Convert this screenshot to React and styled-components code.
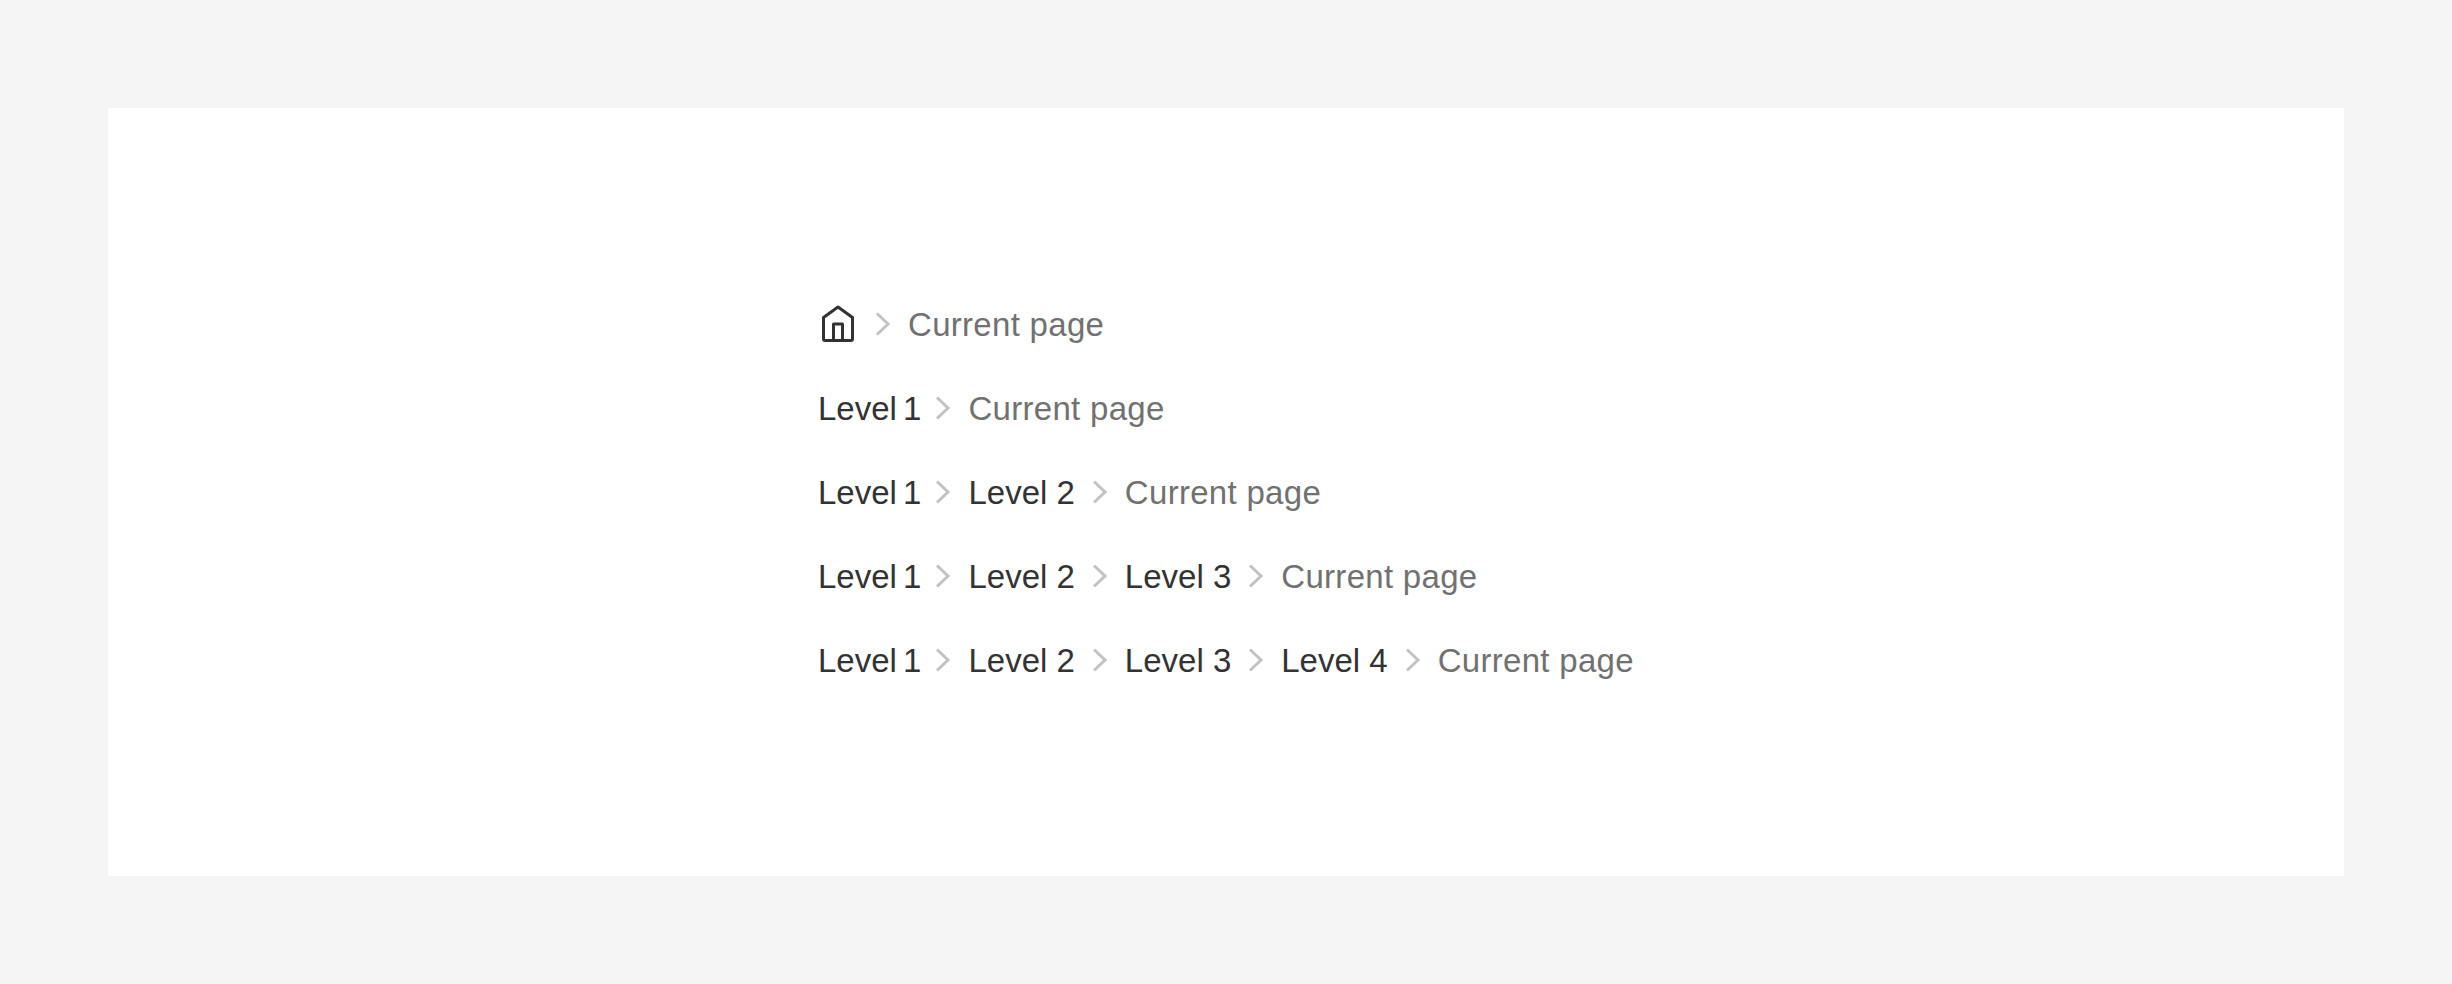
import React from 'react'
import styled, {createGlobalStyle} from 'styled-components'

const GlobalStyle = createGlobalStyle`
    html, body {
        margin: 0;
        padding: 0;
        background: #f5f5f5;
    }
`

const rows = [
    [],
    ['Level 1'],
    ['Level 1', 'Level 2'],
    ['Level 1', 'Level 2', 'Level 3'],
    ['Level 1', 'Level 2', 'Level 3', 'Level 4'],
]

function HomeIcon() {
    return (
        <svg width="40" height="40" viewBox="0 0 40 40" fill="none" stroke="#333" strokeWidth="3" strokeLinejoin="round">
            <path d="M5.5 13.5 20 3l14.5 10.5V35a1.5 1.5 0 0 1-1.5 1.5H7A1.5 1.5 0 0 1 5.5 35Z"/>
            <path d="M15.5 36.5V20h9v16.5"/>
        </svg>
    )
}

function Chevron() {
    return (
        <ChevronBox>
            <svg width="16" height="26" viewBox="0 0 16 26" fill="none" stroke="#c2c2c2" strokeWidth="3">
                <path d="M2 2.5 13 13 2 23.5"/>
            </svg>
        </ChevronBox>
    )
}

export default function App() {
    return (
        <Page>
            <GlobalStyle/>
            <Card>
                <List>
                    {rows.map((levels, idx) => (
                        <Row key={idx}>
                            {idx === 0 ? <HomeIcon/> : null}
                            {levels.map((level, i) => (
                                <React.Fragment key={level}>
                                    <Crumb $first={i === 0}>{level}</Crumb>
                                    <Chevron/>
                                </React.Fragment>
                            ))}
                            {idx === 0 ? <Chevron/> : null}
                            <Current>Current page</Current>
                        </Row>
                    ))}
                </List>
            </Card>
        </Page>
    )
}

const Page = styled.div`
    box-sizing: border-box;
    width: 2452px;
    height: 984px;
    padding: 108px;
    background: #f5f5f5;
`

const Card = styled.div`
    box-sizing: border-box;
    width: 2236px;
    height: 768px;
    padding: 192px 0 0 710px;
    background: #fff;
`

const List = styled.div`
    display: flex;
    flex-direction: column;
    gap: 36px;
`

const Row = styled.div`
    display: flex;
    align-items: center;
    height: 48px;
    font-family: "Liberation Sans", Arial, sans-serif;
    font-size: 33px;
    line-height: 48px;
`

const Crumb = styled.span`
    padding-top: 2px;
    color: #333;
    word-spacing: ${props => props.$first ? '-3px' : '0'};
    margin-right: ${props => props.$first ? '-3px' : '0'};
`

const Current = styled.span`
    padding-top: 2px;
    color: #717171;
    letter-spacing: 0.3px;
`

const ChevronBox = styled.span`
    display: flex;
    justify-content: center;
    align-items: center;
    width: 50px;
    height: 48px;
`
